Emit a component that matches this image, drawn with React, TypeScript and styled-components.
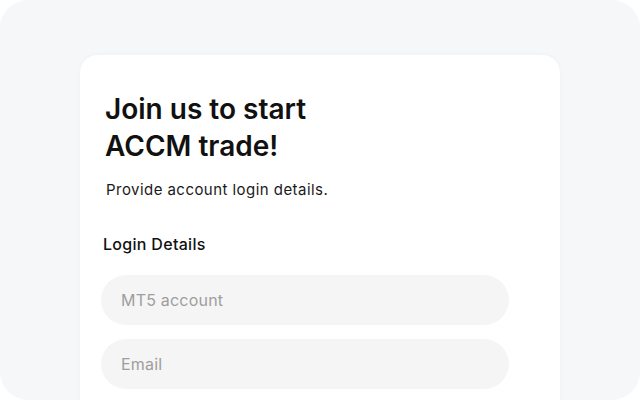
import React from 'react';
import styled, { createGlobalStyle } from 'styled-components';

const GlobalStyle = createGlobalStyle`
  html, body {
    margin: 0;
    padding: 0;
    background: #ffffff;
  }
  body {
    font-family: Inter, "Noto Sans", sans-serif;
    -webkit-font-smoothing: antialiased;
  }
`;

const Frame = styled.div`
  width: 640px;
  height: 400px;
  box-sizing: border-box;
  background: #f6f7f9;
  border-radius: 28px;
  overflow: hidden;
  display: flex;
  justify-content: center;
  padding-top: 55px;
`;

const Card = styled.div`
  width: 480px;
  height: 400px;
  box-sizing: border-box;
  background: #ffffff;
  border-radius: 18px;
  box-shadow: 0 0 6px rgba(0, 0, 0, 0.03);
  padding: 36px 50px 0 21px;
  display: flex;
  flex-direction: column;
`;

const Title = styled.h1`
  margin: 0 0 0 4px;
  font-size: 28px;
  line-height: 37px;
  font-weight: 600;
  letter-spacing: 0;
  color: #111111;
`;

const Subtitle = styled.p`
  margin: 15px 0 0 5px;
  font-size: 15px;
  line-height: 20px;
  font-weight: 400;
  color: #1a1a1a;
  letter-spacing: 0.45px;
`;

const SectionLabel = styled.h2`
  margin: 34px 0 0 2px;
  font-size: 16px;
  line-height: 20px;
  font-weight: 500;
  color: #111111;
  letter-spacing: 0.3px;
`;

const Fields = styled.div`
  display: flex;
  flex-direction: column;
  gap: 14px;
  margin-top: 21px;
`;

const Input = styled.input`
  width: 408px;
  height: 50px;
  box-sizing: border-box;
  border: none;
  outline: none;
  border-radius: 25px;
  background: #f5f5f5;
  padding: 0 20px;
  font-family: Inter, "Noto Sans", sans-serif;
  font-size: 16px;
  color: #222222;
  letter-spacing: 0.2px;

  &::placeholder {
    color: #9e9e9e;
  }
`;

const App: React.FC = () => {
  return (
    <>
      <GlobalStyle />
      <Frame>
        <Card>
          <Title>
            Join us to start
            <br />
            ACCM trade!
          </Title>
          <Subtitle>Provide account login details.</Subtitle>
          <SectionLabel>Login Details</SectionLabel>
          <Fields>
            <Input type="text" placeholder="MT5 account" />
            <Input type="email" placeholder="Email" />
          </Fields>
        </Card>
      </Frame>
    </>
  );
};

export default App;
